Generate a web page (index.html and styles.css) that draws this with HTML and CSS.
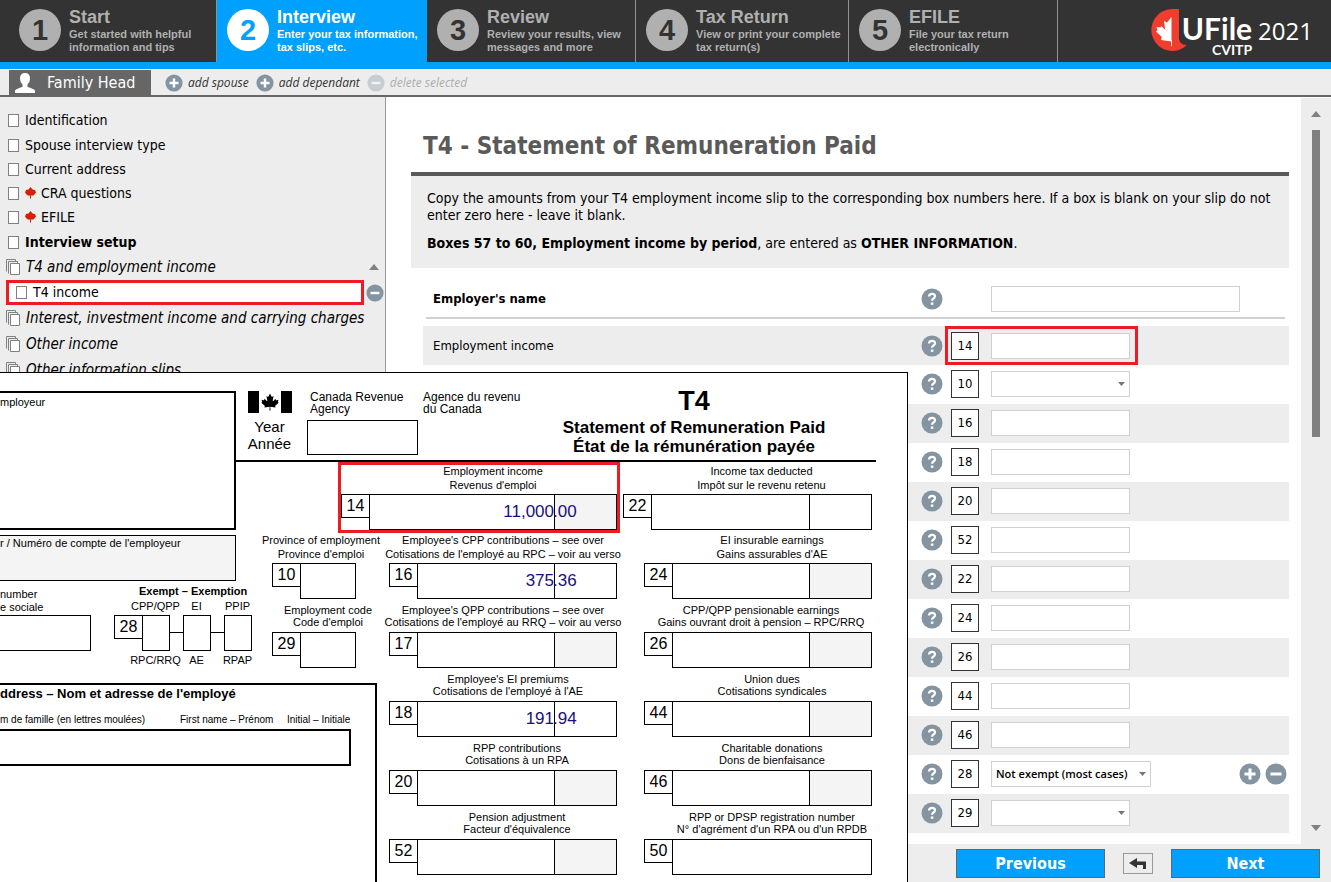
FILE: index.html
```html
<!DOCTYPE html>
<html lang="en">
<head>
<meta charset="utf-8">
<title>UFile CVITP 2021 - T4 Statement of Remuneration Paid</title>
<link rel="stylesheet" href="styles.css">
</head>
<body>
<svg class="defs" aria-hidden="true">
  <symbol id="leaf" viewBox="-3 0 106 102"><path d="M50 1 41 18Q39 21 36 20L29 16 34 42Q34 47 29 44L18 32 15 39Q14 41 11 40L0 38 4 51Q4 53 2 54L-2 56 18 72Q20 74 19 77L17 83 48 79 47 101H53L52 79 83 83 81 77Q80 74 82 72L102 56 98 54Q96 53 96 51L100 38 89 40Q86 41 85 39L82 32 71 44Q66 47 66 42L71 16 64 20Q61 21 59 18Z"/></symbol>
  <symbol id="small-leaf" viewBox="0 0 11 12"><path d="M5.500 0 7.500 2.500 10 3 11 5.500 8.500 8.500H6v3H5v-3H2.500L0 5.500 1 3l2.500-.5z"/></symbol>
  <symbol id="stack" viewBox="0 0 14 16"><path d="M.5 12.5V.5h9v2M2.500 14.500V2.500h9v2" fill="none" stroke="#808080"/><path d="M4.500 4.500h9v11h-9z" fill="#fff" stroke="#808080"/></symbol>
  <symbol id="plus" viewBox="0 0 22 22"><circle cx="11" cy="11" r="10.500" fill="#8494a0"/><path d="M11 5.500v11M5.500 11h11" stroke="#fff" stroke-width="3"/></symbol>
  <symbol id="minus" viewBox="0 0 22 22"><circle cx="11" cy="11" r="10.500" fill="#8494a0"/><path d="M5.500 11h11" stroke="#fff" stroke-width="3"/></symbol>
  <symbol id="help" viewBox="0 0 22 22"><circle cx="11" cy="11" r="10.500" fill="#8494a0"/><path d="M8 8.500q.2-2.600 3-2.600 3 0 3 2.400 0 1.300-1.500 2.200-1.400.8-1.400 2.300" fill="none" stroke="#fff" stroke-width="2.200"/><path d="M9.800 14.500h2.600v2.300H9.800z" fill="#fff"/></symbol>
</svg>

<header class="topbar">
  <nav class="steps">
    <a href="#start" class="step step-start"><span class="num">1</span><span class="step-text"><strong>Start</strong>Get started with helpful<br>information and tips</span></a>
    <a href="#interview" class="step step-interview active"><span class="num">2</span><span class="step-text"><strong>Interview</strong>Enter your tax information,<br>tax slips, etc.</span></a>
    <a href="#review" class="step step-review"><span class="num">3</span><span class="step-text"><strong>Review</strong>Review your results, view<br>messages and more</span></a>
    <a href="#return" class="step step-return"><span class="num">4</span><span class="step-text"><strong>Tax Return</strong>View or print your complete<br>tax return(s)</span></a>
    <a href="#efile" class="step step-efile"><span class="num">5</span><span class="step-text"><strong>EFILE</strong>File your tax return<br>electronically</span></a>
  </nav>
  <div class="brand">
    <svg class="brand-mark" viewBox="0 0 36 42" aria-hidden="true"><path d="M21 0H28V30Q29 36 36 36A21 21 0 1 1 21 0Z" fill="#ef3e2d"/><path d="M20.500 8v24.500L10 31l.8-3L5 22.500l1.500-1-1-3.500 4 .5.7-1.500 4 3.800L13 12l3 1.600z" fill="#fff"/><path d="M20 31h1v6h-1z" fill="#eee"/></svg>
    <div class="brand-name"><span class="ufile">UFile</span><span class="cvitp">CVITP</span></div>
    <span class="year">2021</span>
  </div>
</header>

<div class="people">
  <button class="person"><svg viewBox="0 0 20 20" aria-hidden="true"><path d="M10 0q5 0 5 5.500 0 4-2.500 6v2.500q6 1.500 7.500 3.500V20H0v-2.500Q1.500 15.500 7.500 14v-2.500Q5 9.500 5 5.500 5 0 10 0Z" fill="#fff"/></svg>Family Head</button>
  <button class="act"><svg><use href="#plus"/></svg>add spouse</button>
  <button class="act"><svg><use href="#plus"/></svg>add dependant</button>
  <button class="act off" disabled><svg><use href="#minus"/></svg>delete selected</button>
</div>

<main class="work">
  <aside class="side">
    <label class="item"><input type="checkbox">Identification</label>
    <label class="item"><input type="checkbox">Spouse interview type</label>
    <label class="item"><input type="checkbox">Current address</label>
    <label class="item"><input type="checkbox"><svg class="red-leaf"><use href="#small-leaf"/></svg>CRA questions</label>
    <label class="item"><input type="checkbox"><svg class="red-leaf"><use href="#small-leaf"/></svg>EFILE</label>
    <label class="item bold"><input type="checkbox">Interview setup</label>
    <button class="group"><svg class="stack"><use href="#stack"/></svg><span>T4 and employment income</span><i class="tri-up"></i></button>
    <div class="current"><label class="item"><input type="checkbox">T4 income</label><button class="round" aria-label="Remove T4 income"><svg><use href="#minus"/></svg></button></div>
    <button class="group"><svg class="stack"><use href="#stack"/></svg><span>Interest, investment income and carrying charges</span></button>
    <button class="group"><svg class="stack"><use href="#stack"/></svg><span>Other income</span></button>
    <button class="group"><svg class="stack"><use href="#stack"/></svg><span>Other information slips</span></button>
  </aside>

  <section class="content">
    <h1>T4 - Statement of Remuneration Paid</h1>
    <div class="intro">
      <p>Copy the amounts from your T4 employment income slip to the corresponding box numbers here. If a box is blank on your slip do not enter zero here - leave it blank.</p>
      <p><b>Boxes 57 to 60, Employment income by period</b>, are entered as <b>OTHER INFORMATION</b>.</p>
    </div>
    <div class="row employer"><label for="employer">Employer's name</label><button class="help" aria-label="Help"><svg><use href="#help"/></svg></button><span></span><input id="employer" class="wide" type="text"></div>
    <div class="rows">
      <div class="row"><label for="b14">Employment income</label><button class="help" aria-label="Help"><svg><use href="#help"/></svg></button><div class="marked"><span class="box">14</span><input id="b14" type="text"></div></div>
      <div class="row"><span></span><button class="help" aria-label="Help"><svg><use href="#help"/></svg></button><span class="box">10</span><select aria-label="Box 10"><option></option></select></div>
      <div class="row"><span></span><button class="help" aria-label="Help"><svg><use href="#help"/></svg></button><span class="box">16</span><input aria-label="Box 16" type="text"></div>
      <div class="row"><span></span><button class="help" aria-label="Help"><svg><use href="#help"/></svg></button><span class="box">18</span><input aria-label="Box 18" type="text"></div>
      <div class="row"><span></span><button class="help" aria-label="Help"><svg><use href="#help"/></svg></button><span class="box">20</span><input aria-label="Box 20" type="text"></div>
      <div class="row"><span></span><button class="help" aria-label="Help"><svg><use href="#help"/></svg></button><span class="box">52</span><input aria-label="Box 52" type="text"></div>
      <div class="row"><span></span><button class="help" aria-label="Help"><svg><use href="#help"/></svg></button><span class="box">22</span><input aria-label="Box 22" type="text"></div>
      <div class="row"><span></span><button class="help" aria-label="Help"><svg><use href="#help"/></svg></button><span class="box">24</span><input aria-label="Box 24" type="text"></div>
      <div class="row"><span></span><button class="help" aria-label="Help"><svg><use href="#help"/></svg></button><span class="box">26</span><input aria-label="Box 26" type="text"></div>
      <div class="row"><span></span><button class="help" aria-label="Help"><svg><use href="#help"/></svg></button><span class="box">44</span><input aria-label="Box 44" type="text"></div>
      <div class="row"><span></span><button class="help" aria-label="Help"><svg><use href="#help"/></svg></button><span class="box">46</span><input aria-label="Box 46" type="text"></div>
      <div class="row"><span></span><button class="help" aria-label="Help"><svg><use href="#help"/></svg></button><span class="box">28</span><div class="multi"><select class="exempt-select" aria-label="Box 28"><option>Not exempt (most cases)</option></select><button class="help" aria-label="Add"><svg><use href="#plus"/></svg></button><button class="help" aria-label="Remove"><svg><use href="#minus"/></svg></button></div></div>
      <div class="row"><span></span><button class="help" aria-label="Help"><svg><use href="#help"/></svg></button><span class="box">29</span><select aria-label="Box 29"><option></option></select></div>
    </div>
  </section>
  <div class="scroll"><i class="tri-up"></i><div class="track"><div class="thumb"></div></div><i class="tri-down"></i></div>
</main>

<footer class="actions">
  <button class="primary">Previous</button>
  <button class="back" aria-label="Back"><svg viewBox="0 0 18 12" aria-hidden="true"><path d="M0 6 8 1v3.500h9V12h-3V8H8v3z" fill="#333"/></svg></button>
  <button class="primary">Next</button>
</footer>

<section class="slip" aria-label="T4 slip">
  <div class="slip-left">
    <div class="employer-box">mployeur</div>
    <div class="account-box">r / Numéro de compte de l'employeur</div>
    <div class="sin-row">
      <div class="sin"><span>number<br>e sociale</span><div class="cell"></div></div>
      <div class="exempt">
        <b>Exempt – Exemption</b>
        <div class="three"><span>CPP/QPP</span><span>EI</span><span>PPIP</span></div>
        <div class="exempt-cells"><span class="tag">28</span><i class="cell"></i><i class="dash"></i><i class="cell"></i><i class="dash"></i><i class="cell"></i></div>
        <div class="three"><span>RPC/RRQ</span><span>AE</span><span>RPAP</span></div>
      </div>
    </div>
  </div>

  <div class="slip-head">
    <div class="flag-col">
      <div class="flag"><i></i><svg><use href="#leaf"/></svg><i></i></div>
      <div>Year<br>Année</div>
    </div>
    <div class="agency">
      <div class="agency-names"><span>Canada Revenue<br>Agency</span><span>Agence du revenu<br>du Canada</span></div>
      <div class="year-box"></div>
    </div>
    <div class="slip-title"><span class="t4">T4</span>Statement of Remuneration Paid<br>État de la rémunération payée</div>
  </div>

  <div class="codes">
    <div class="field"><p class="code-10">Province of employment<br>Province d'emploi</p><div class="line"><span class="tag">10</span><span class="amount"></span></div></div>
    <div class="field tight"><p class="over">Employment code<br>Code d'emploi</p><div class="line"><span class="tag">29</span><span class="amount"></span></div></div>
  </div>

  <div class="fields">
    <div class="field f14"><p class="over">Employment income<br>Revenus d'emploi</p><div class="line"><span class="tag">14</span><span class="amount">11,000</span><span class="cents shade">.00</span></div></div>
    <div class="field f22"><p class="over">Income tax deducted<br>Impôt sur le revenu retenu</p><div class="line"><span class="tag">22</span><span class="amount"></span><span class="cents"></span></div></div>
    <div class="field"><p>Employee's CPP contributions – see over<br>Cotisations de l'employé au RPC – voir au verso</p><div class="line"><span class="tag">16</span><span class="amount">375</span><span class="cents">.36</span></div></div>
    <div class="field"><p class="over">EI insurable earnings<br>Gains assurables d'AE</p><div class="line"><span class="tag">24</span><span class="amount"></span><span class="cents shade"></span></div></div>
    <div class="field tight"><p>Employee's QPP contributions – see over<br>Cotisations de l'employé au RRQ – voir au verso</p><div class="line"><span class="tag">17</span><span class="amount"></span><span class="cents shade"></span></div></div>
    <div class="field tight"><p class="pension">CPP/QPP pensionable earnings<br>Gains ouvrant droit à pension – RPC/RRQ</p><div class="line"><span class="tag">26</span><span class="amount"></span><span class="cents shade"></span></div></div>
    <div class="field tight"><p class="premiums">Employee's EI premiums<br>Cotisations de l'employé à l'AE</p><div class="line"><span class="tag">18</span><span class="amount">191</span><span class="cents">.94</span></div></div>
    <div class="field tight"><p class="over">Union dues<br>Cotisations syndicales</p><div class="line"><span class="tag">44</span><span class="amount"></span><span class="cents shade"></span></div></div>
    <div class="field tight"><p class="over">RPP contributions<br>Cotisations à un RPA</p><div class="line"><span class="tag">20</span><span class="amount"></span><span class="cents shade"></span></div></div>
    <div class="field tight"><p class="over">Charitable donations<br>Dons de bienfaisance</p><div class="line"><span class="tag">46</span><span class="amount"></span><span class="cents shade"></span></div></div>
    <div class="field tight"><p class="over">Pension adjustment<br>Facteur d'équivalence</p><div class="line"><span class="tag">52</span><span class="amount"></span><span class="cents shade"></span></div></div>
    <div class="field tight"><p class="over">RPP or DPSP registration number<br>N° d'agrément d'un RPA ou d'un RPDB</p><div class="line"><span class="tag">50</span><span class="amount"></span></div></div>
  </div>

  <div class="address">
    <b>ddress – Nom et adresse de l'employé</b>
    <div class="name-heads"><span>m de famille (en lettres moulées)</span><span>First name – Prénom</span><span>Initial – Initiale</span></div>
    <div class="name-box"></div>
  </div>
</section>
</body>
</html>
```
FILE: styles.css
```css
* { box-sizing: border-box; }
body {
  margin: 0;
  height: 100vh;
  display: flex;
  flex-direction: column;
  position: relative;
  overflow: hidden;
  background: #fff;
  color: #000;
  font: 14px/17px "DejaVu Sans Condensed", "DejaVu Sans", sans-serif;
}
button, input, select { font: inherit; color: inherit; margin: 0; border-radius: 0; }
button { border: 0; background: none; padding: 0; }
svg { display: block; flex: none; }
p { margin: 0; }
.defs { position: absolute; width: 0; height: 0; }

/* Step navigation */
.topbar {
  flex: none;
  display: flex;
  justify-content: space-between;
  height: 69px;
  background: #333;
  border-bottom: 7px solid #00a0ff;
  font-family: "Liberation Sans", Arial, sans-serif;
}
.steps { display: flex; }
.step {
  display: flex;
  align-items: flex-start;
  gap: 8px;
  padding: 9px 0 0 10px;
  border-right: 1px solid #8b9298;
  color: #b0b0b0;
  text-decoration: none;
  white-space: nowrap;
}
.step-start { width: 217px; padding-left: 19px; }
.step-interview { width: 210px; }
.step-review { width: 209px; }
.step-return { width: 213px; }
.step-efile { width: 209px; }
.step.active { background: #00a0ff; color: #fff; border-color: #00a0ff; }
.num {
  flex: none;
  width: 42px;
  height: 42px;
  border-radius: 50%;
  background: #b0b0b0;
  color: #333;
  font: bold 29px/42px "Liberation Sans", Arial, sans-serif;
  text-align: center;
}
.active .num { background: #fff; color: #00a0ff; }
.step-text { font-size: 11px; font-weight: bold; line-height: 13px; }
.step-text strong { display: block; font-size: 18px; line-height: 18px; margin-top: -1px; padding-bottom: 2px; }
.brand { display: flex; padding: 9px 18px 0 0; color: #fff; }
.brand-mark { width: 36px; height: 42px; }
.brand-name { display: flex; flex-direction: column; align-items: flex-end; padding-top: 2px; margin-left: -5px; }
.ufile { font: bold 30px/34px Lato, sans-serif; }
.cvitp { font: bold 14px/10px Lato, sans-serif; }
.year { font: 24px/44px "Open Sans", sans-serif; margin-left: 6px; }

/* Family members */
.people {
  flex: none;
  display: flex;
  align-items: center;
  height: 28px;
  border-top: 1px solid #fff;
  border-bottom: 2px solid #666;
  background: #ededed;
  padding-left: 9px;
}
.person {
  display: flex;
  align-items: center;
  gap: 12px;
  width: 142px;
  height: 25px;
  padding-left: 6px;
  margin-right: 14px;
  background: #666;
  color: #fff;
  font-size: 16px;
}
.person svg { width: 20px; height: 20px; }
.act { display: flex; align-items: center; gap: 5px; margin-right: 7px; color: #333; font: italic 12px/17px "Open Sans", sans-serif; }
.act svg { width: 18px; height: 18px; }
.off { opacity: .35; }

/* Interview topics */
.work { flex: 1; min-height: 0; display: flex; }
.side { flex: none; width: 386px; padding-top: 11px; background: #ededed; border-right: 1px solid #999; overflow: hidden; }
.item { display: flex; align-items: center; gap: 6px; height: 24px; padding-left: 8px; }
.item:nth-child(2) { margin-top: 1px; }
.bold { font-weight: bold; margin-top: 1px; }
.item input { appearance: none; width: 11px; height: 13px; background: #fff; border: 1px solid #808080; }
.red-leaf { width: 11px; height: 12px; fill: #d81e05; }
.item .red-leaf { margin-right: -1px; }
.group { display: flex; align-items: center; width: 100%; height: 26px; padding: 0 6px; gap: 6px; text-align: left; font-size: 15px; font-style: italic; white-space: nowrap; }
.group span { flex: 1; }
.stack { width: 14px; height: 16px; }
.tri-up { flex: none; border: 5px solid transparent; border-bottom: 6px solid #808080; border-top: 0; }
.tri-down { flex: none; border: 5px solid transparent; border-top: 6px solid #808080; border-bottom: 0; }
.current { display: flex; align-items: center; gap: 2px; padding: 0 0 0 6px; }
.current .item { flex: none; width: 358px; height: 25px; padding-left: 7px; background: #fff; border: 3px solid #ed1c24; }
.round svg { width: 18px; height: 18px; }

/* Form */
.content { flex: 1; min-width: 0; padding: 33px 12px 0 25px; overflow: hidden; }
h1 { margin: 0; padding-left: 12px; color: #5a5a5a; font-size: 24px; line-height: 32px; padding-bottom: 10px; border-bottom: 4px solid #5a5a5a; }
.intro { padding: 14px 16px 15px; background: #ededed; }
.intro p + p { padding-top: 11px; padding-bottom: 1px; }
.row {
  display: grid;
  grid-template-columns: 1fr 30px 40px 298px;
  align-items: center;
  height: 39px;
  padding: 0 0 2px 10px;
  font-size: 13px;
}
.rows { margin: 7px 0 0 12px; }
.rows .row:nth-child(odd) { background: #ededed; }
.employer { margin: 12px 4px 0 15px; padding: 0 0 0 7px; border-bottom: 2px solid #d0d0d0; font-weight: bold; grid-template-columns: 1fr 30px 40px 294px; }
.help svg { width: 22px; height: 22px; }
.row input, .row select { width: 139px; height: 26px; background: #fff; border: 1px solid #d0d0d0; padding: 0 4px; }
.row .wide { width: 249px; }
.row select {
  appearance: none;
  background: #fff url("data:image/svg+xml,%3Csvg xmlns='http://www.w3.org/2000/svg' width='7' height='4'%3E%3Cpath d='M0 0h7L3.500 4z' fill='%23777'/%3E%3C/svg%3E") no-repeat right 4px center;
}
.row .exempt-select { width: 160px; font: 600 11px/17px "Open Sans", sans-serif; margin-right: auto; }
.multi { display: flex; align-items: center; gap: 4px; padding-right: 2px; }
.box { width: 28px; height: 28px; border: 1px solid #333; background: #fff; line-height: 26px; text-align: center; }
.marked { grid-column: 3 / 5; justify-self: start; display: flex; align-items: center; gap: 12px; height: 39px; margin-left: -6px; padding: 0 5px 0 3px; border: 3px solid #ed1c24; }
.scroll { flex: none; width: 30px; margin-top: 1px; padding: 13px 0; background: #ededed; display: flex; flex-direction: column; align-items: center; gap: 13px; }
.track { flex: 1; width: 8px; }
.thumb { height: 45%; background: #808080; }
.actions { flex: none; display: flex; align-items: center; justify-content: flex-end; gap: 18px; height: 38px; padding-right: 11px; background: #ededed; }
.primary { width: 149px; height: 29px; border: 1px solid #666; background: #00a0ff; color: #fff; font-size: 16px; font-weight: bold; }
.back { width: 30px; height: 21px; border: 1px solid #999; display: flex; align-items: center; justify-content: center; }
.back svg { width: 18px; height: 12px; }

/* Paper slip lying over the form */
.slip {
  position: absolute;
  left: 0;
  top: 372px;
  bottom: 0;
  width: 908px;
  display: grid;
  grid-template-columns: 260px 129px 483px;
  grid-template-rows: 89px 221px 1fr;
  overflow: hidden;
  background: #fff;
  border: solid #000;
  border-width: 1px 1px 0 0;
  font: 11px/14px "Liberation Sans", Arial, sans-serif;
}
.slip-left { grid-area: 1 / 1 / 3 / 2; padding-top: 18px; }
.employer-box { width: 236px; height: 139px; padding-top: 2px; border: solid #000; border-width: 2px 2px 2px 0; }
.account-box { width: 236px; height: 46px; margin-top: 5px; border: solid #000; border-width: 1px 1px 1px 0; background: #f4f4f4; }
.sin-row { display: flex; justify-content: space-between; padding-top: 3px; }
.sin { width: 91px; line-height: 13px; padding-top: 4px; }
.cell { display: block; height: 36px; border: 1px solid #000; }
.sin .cell { border-left: 0; margin-top: 1px; }
.exempt { width: 146px; }
.exempt b { display: block; padding-left: 25px; white-space: nowrap; }
.three { display: grid; grid-template-columns: repeat(3, 41px); justify-items: center; padding: 1px 0 2px 21px; }
.exempt-cells { display: flex; }
.exempt-cells .cell { width: 28px; }
.exempt-cells + .three { padding-top: 2px; }
.dash { width: 13px; height: 18px; border-bottom: 1px solid #000; }
.tag { flex: none; width: 29px; height: 24px; margin-right: -1px; border: 1px solid #000; background: #fff; font-size: 16px; line-height: 22px; text-align: center; }

.slip-head { grid-area: 1 / 2 / 2 / 4; display: flex; margin: 0 -4px 0 -24px; padding: 18px 0 0 11px; border-bottom: 2px solid #000; }
.flag-col { width: 45px; text-align: center; font-size: 15px; line-height: 17px; }
.flag { display: flex; align-items: center; justify-content: space-between; height: 22px; margin: 0 0 5px 1px; }
.flag i { width: 11px; height: 22px; background: #000; }
.flag svg { width: 18px; height: 20px; }
.agency { padding-left: 15px; font-size: 12px; line-height: 12px; }
.agency-names { display: grid; grid-template-columns: 113px 120px; padding-left: 3px; }
.year-box { width: 111px; height: 35px; margin-top: 5px; border: 1px solid #000; }
.slip-title { flex: 1; padding-right: 31px; text-align: center; font-size: 17px; line-height: 19px; font-weight: bold; white-space: nowrap; }
.t4 { display: block; font-size: 27px; line-height: 20px; padding-bottom: 7px; }

.codes { grid-area: 2 / 2 / 3 / 3; padding: 68px 33px 0 12px; display: grid; grid-template-columns: 84px; grid-auto-rows: 69px; }
.fields { grid-area: 2 / 3 / 4 / 4; margin-top: -1px; display: grid; grid-template-columns: 228px 228px; grid-auto-rows: 69px; column-gap: 27px; align-content: start; }
.field { display: flex; flex-direction: column; justify-content: flex-end; min-width: 0; }
.field p { align-self: stretch; display: flex; justify-content: center; text-align: center; white-space: nowrap; padding-bottom: 2px; }
.tight p { line-height: 12px; padding-bottom: 4px; }
.field .over { padding-left: 28px; }
.field .premiums { padding-left: 10px; }
.field .pension { padding-left: 6px; }
.field .code-10 { padding-left: 14px; }
.f14 { margin: 4px 0 0 -48px; outline: 3px solid #ed1c24; }
.f22 { margin-left: -21px; }
.line { display: flex; height: 36px; }
.amount, .cents { border: 1px solid #000; font-size: 17px; line-height: 34px; color: #1a0f80; }
.amount { flex: 1; text-align: right; }
.cents { width: 63px; margin-left: -1px; text-indent: -2px; }
.shade { background: #f4f4f4; }

.address { grid-area: 3 / 1 / 4 / 3; width: 377px; border: solid #000; border-width: 2px 2px 0 0; padding-top: 1px; }
.address b { font-size: 13px; line-height: 16px; }
.name-heads { display: grid; grid-template-columns: 180px 107px 1fr; padding: 12px 0 3px; font-size: 10px; line-height: 12px; white-space: nowrap; }
.name-box { width: 351px; height: 37px; border: solid #000; border-width: 2px 2px 2px 0; }
```
